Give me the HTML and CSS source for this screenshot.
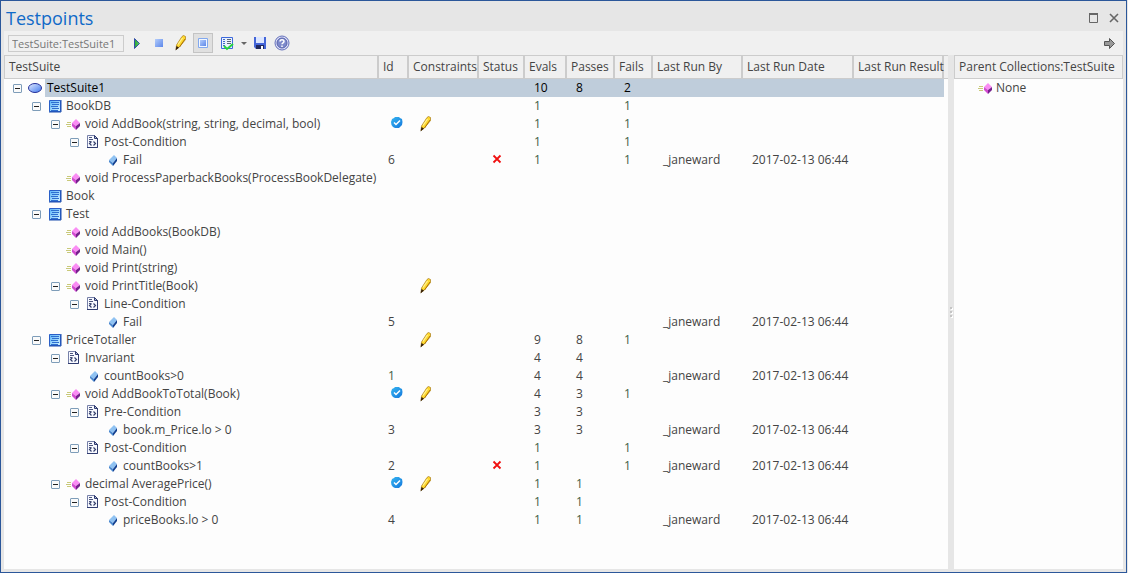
FILE: index.html
```
<!DOCTYPE html>
<html lang="en">
<head>
<meta charset="utf-8">
<title>Testpoints</title>
<link rel="stylesheet" href="styles.css">
</head>
<body>
<svg class="defs" aria-hidden="true">
  <defs>
    <linearGradient id="g-blue" x1="0" y1="0" x2="1" y2="1"><stop offset="0" stop-color="#b4cdfb"/><stop offset="1" stop-color="#5c87ea"/></linearGradient>
    <linearGradient id="g-oval" x1="0" y1="0" x2="1" y2="1"><stop offset="0" stop-color="#e4edff"/><stop offset="1" stop-color="#3f78ee"/></linearGradient>
    <linearGradient id="g-badge" x1="0" y1="0" x2="1" y2="1"><stop offset="0" stop-color="#35b4f0"/><stop offset="1" stop-color="#1478dc"/></linearGradient>
    <linearGradient id="g-class" x1="0" y1="0" x2="1" y2="1"><stop offset="0" stop-color="#5ab4fa"/><stop offset="1" stop-color="#d4f2ff"/></linearGradient>
    <linearGradient id="g-play" x1="0" y1="0" x2="1" y2="0"><stop offset="0" stop-color="#2a9a35"/><stop offset="1" stop-color="#58d860"/></linearGradient>
  </defs>
  <symbol id="suite" viewBox="0 0 16 16"><ellipse cx="7" cy="8" rx="6.500" ry="4.500" fill="url(#g-oval)" stroke="#27329a"/></symbol>
  <symbol id="class" viewBox="0 0 16 16"><path fill="url(#g-class)" stroke="#2a5fc8" d="M2.500 2.500h11v11h-11z"/><path stroke="#1c4fae" d="M14 2v12H2" fill="none"/><path stroke="#2e6fd0" d="M4 4.500h8M5 6.500h7M4 8.500h7M5 10.500h7M4 12.500h7"/></symbol>
  <symbol id="method" viewBox="0 0 16 16"><path stroke="#c9c97a" d="M1 6.500h4M0 8.500h5M1 10.500h4"/><path fill="#fa8df4" d="M10 3l4 4-4 3-4-3z"/><path fill="#d24bd0" d="M6 7l4 3v4l-4-4z"/><path fill="#75208c" d="M14 7l-4 3v4l4-4z"/></symbol>
  <symbol id="script" viewBox="0 0 16 16"><path fill="#f7f9ff" stroke="#7680a8" d="M2.500 1.500h7l3 3v9h-10z"/><path fill="none" stroke="#303c70" d="M12.500 4v9.500H2"/><path fill="#b5bddd" stroke="#303c70" d="M9.500 1.500v3h3z"/><path stroke="#4c557d" d="M4 3.500h3M4 5.500h4M4 7.500h2"/><path fill="none" stroke="#36416d" stroke-width="1.200" d="M6.500 7.500l-2 2 2 2M8.500 7.500l2 2-2 2"/></symbol>
  <symbol id="point" viewBox="0 0 16 16"><path fill="#8fc2f2" d="M10 3l3 3-4 5-4-3z"/><path fill="#4a88cf" d="M5 8l4 3v3l-4-4z"/><path fill="#123f8f" d="M13 6l-4 5v3l4-5z"/></symbol>
  <symbol id="pencil" viewBox="0 0 16 16"><path fill="#ffd92e" stroke="#a87a18" stroke-width=".7" d="M9 1.500l1.500-1 2 1v3L6.500 12 3 14.500l.500-4.500z"/><path stroke="#fff39b" stroke-width="1.200" d="M9.500 3l-4.500 6.500"/><path stroke="#b07608" d="M12 4l-5.500 8"/><path fill="#33200c" d="M3.500 11l2.500 1.500-3.500 3z"/></symbol>
  <symbol id="badge" viewBox="0 0 16 16"><path fill="url(#g-badge)" d="M7 1h4l1 1 2 1 .500 3-.500 3-1 1-2 2H7l-2-1-1.500-2L3 6l1-3 2-1z"/><path fill="none" stroke="#fff" stroke-width="1.500" d="M6 6.500l2 2 4-4"/></symbol>
  <symbol id="cross" viewBox="0 0 16 16"><path fill="none" stroke="#f01010" stroke-width="1.800" d="M5.500 3.500l7 7M12.500 3.500l-7 7"/></symbol>
</svg>

<main class="window">
  <header class="titlebar">
    <h1>Testpoints</h1>
    <button class="win" aria-label="Maximize"><svg width="12" height="12"><path fill="none" stroke="#666" d="M1.500 2v8.500h8V2"/><path stroke="#666" stroke-width="2" d="M1 2h9"/></svg></button>
    <button class="win" aria-label="Close"><svg width="12" height="12"><path stroke="#666" stroke-width="1.600" d="M2 2l8 8M10 2l-8 8"/></svg></button>
  </header>

  <div class="toolbar">
    <input class="suite-name" aria-label="Test suite" value="TestSuite:TestSuite1" readonly>
    <button class="tool" aria-label="Run"><svg width="16" height="16"><path fill="url(#g-play)" stroke="#3450a8" d="M5.500 3.500l5 5-5 5z"/></svg></button>
    <button class="tool" aria-label="Stop"><svg width="16" height="16"><path fill="url(#g-blue)" d="M4 4h8v8H4z"/></svg></button>
    <button class="tool" aria-label="Edit"><svg width="16" height="16"><use href="#pencil"/></svg></button>
    <button class="tool pressed" aria-label="Show constraints" aria-pressed="true"><svg width="16" height="16"><path fill="#f2f7ff" stroke="#82a8ee" d="M3.500 3.500h9v9h-9z"/><path fill="url(#g-blue)" d="M5 5h6v6H5z"/></svg></button>
    <button class="tool" aria-label="Reports"><svg width="16" height="16"><path fill="#e9f2ff" stroke="#3d69dc" d="M2.500 2.500h11v11h-11z"/><path stroke="#4169c8" d="M4 4.500h2M4 6.500h2M4 8.500h2M4 10.500h2"/><path stroke="#596778" d="M8 4.500h4M8 6.500h4M8 8.500h4"/><path fill="none" stroke="#25d43d" stroke-width="2" d="M5 11l3 3 6-5"/></svg></button>
    <button class="tool drop" aria-label="Report options"><svg width="8" height="16"><path fill="#666" d="M1 7h6l-3 3z"/></svg></button>
    <button class="tool" aria-label="Save"><svg width="16" height="16"><path fill="#4465d8" d="M2 2h12v12H4l-2-2z"/><path fill="#dce6ff" d="M4 2h8v6H4z"/><path fill="#20295e" d="M4 10h8v4H4z"/><path fill="#fff" d="M9 11h2v3H9z"/></svg></button>
    <button class="tool help" aria-label="Help"><svg width="16" height="16"><circle cx="8" cy="8" r="7" fill="#dcdff8" stroke="#6470ba"/><circle cx="8" cy="8" r="5" fill="#7e8acb" stroke="#5963ab"/><path fill="none" stroke="#fff" stroke-width="1.500" d="M6 6.500c0-2.500 4-2.500 4 0 0 1.500-2 1.300-2 2.800M8 10.500V12"/></svg></button>
    <button class="tool next" aria-label="Next"><svg width="16" height="16"><path fill="#999" stroke="#555" d="M3.500 6.500h5v-3l5 5-5 5v-3h-5z"/></svg></button>
  </div>

  <div class="panes">
    <section class="pane results">
      <table>
        <colgroup><col class="c-tree"><col class="c-id"><col class="c-con"><col class="c-status"><col class="c-evals"><col class="c-passes"><col class="c-fails"><col class="c-by"><col class="c-date"><col class="c-result"><col></colgroup>
        <thead><tr><th>TestSuite</th><th>Id</th><th>Constraints</th><th>Status</th><th>Evals</th><th>Passes</th><th>Fails</th><th>Last Run By</th><th>Last Run Date</th><th>Last Run Result</th><th></th></tr></thead>
        <tbody>
          <tr class="selected"><td><div class="node l0"><button class="toggle" aria-label="Collapse"></button><svg class="icon"><use href="#suite"/></svg><span>TestSuite1</span></div></td><td></td><td></td><td></td><td>10</td><td>8</td><td>2</td><td></td><td></td><td></td><td></td></tr>
          <tr><td><div class="node l1"><button class="toggle" aria-label="Collapse"></button><svg class="icon"><use href="#class"/></svg><span>BookDB</span></div></td><td></td><td></td><td></td><td class="one">1</td><td></td><td class="one">1</td><td></td><td></td><td></td><td></td></tr>
          <tr><td><div class="node l2"><button class="toggle" aria-label="Collapse"></button><svg class="icon"><use href="#method"/></svg><span>void AddBook(string, string, decimal, bool)</span></div></td><td><svg class="icon"><use href="#badge"/></svg></td><td><svg class="icon"><use href="#pencil"/></svg></td><td></td><td class="one">1</td><td></td><td class="one">1</td><td></td><td></td><td></td><td></td></tr>
          <tr><td><div class="node l3"><button class="toggle" aria-label="Collapse"></button><svg class="icon"><use href="#script"/></svg><span>Post-Condition</span></div></td><td></td><td></td><td></td><td class="one">1</td><td></td><td class="one">1</td><td></td><td></td><td></td><td></td></tr>
          <tr><td><div class="node leaf l4"><svg class="icon"><use href="#point"/></svg><span>Fail</span></div></td><td>6</td><td></td><td><svg class="icon"><use href="#cross"/></svg></td><td class="one">1</td><td></td><td class="one">1</td><td>_janeward</td><td>2017-02-13 06:44</td><td></td><td></td></tr>
          <tr><td><div class="node leaf l2"><svg class="icon"><use href="#method"/></svg><span>void ProcessPaperbackBooks(ProcessBookDelegate)</span></div></td><td></td><td></td><td></td><td></td><td></td><td></td><td></td><td></td><td></td><td></td></tr>
          <tr><td><div class="node leaf l1"><svg class="icon"><use href="#class"/></svg><span>Book</span></div></td><td></td><td></td><td></td><td></td><td></td><td></td><td></td><td></td><td></td><td></td></tr>
          <tr><td><div class="node l1"><button class="toggle" aria-label="Collapse"></button><svg class="icon"><use href="#class"/></svg><span>Test</span></div></td><td></td><td></td><td></td><td></td><td></td><td></td><td></td><td></td><td></td><td></td></tr>
          <tr><td><div class="node leaf l2"><svg class="icon"><use href="#method"/></svg><span>void AddBooks(BookDB)</span></div></td><td></td><td></td><td></td><td></td><td></td><td></td><td></td><td></td><td></td><td></td></tr>
          <tr><td><div class="node leaf l2"><svg class="icon"><use href="#method"/></svg><span>void Main()</span></div></td><td></td><td></td><td></td><td></td><td></td><td></td><td></td><td></td><td></td><td></td></tr>
          <tr><td><div class="node leaf l2"><svg class="icon"><use href="#method"/></svg><span>void Print(string)</span></div></td><td></td><td></td><td></td><td></td><td></td><td></td><td></td><td></td><td></td><td></td></tr>
          <tr><td><div class="node l2"><button class="toggle" aria-label="Collapse"></button><svg class="icon"><use href="#method"/></svg><span>void PrintTitle(Book)</span></div></td><td></td><td><svg class="icon"><use href="#pencil"/></svg></td><td></td><td></td><td></td><td></td><td></td><td></td><td></td><td></td></tr>
          <tr><td><div class="node l3"><button class="toggle" aria-label="Collapse"></button><svg class="icon"><use href="#script"/></svg><span>Line-Condition</span></div></td><td></td><td></td><td></td><td></td><td></td><td></td><td></td><td></td><td></td><td></td></tr>
          <tr><td><div class="node leaf l4"><svg class="icon"><use href="#point"/></svg><span>Fail</span></div></td><td>5</td><td></td><td></td><td></td><td></td><td></td><td>_janeward</td><td>2017-02-13 06:44</td><td></td><td></td></tr>
          <tr><td><div class="node l1"><button class="toggle" aria-label="Collapse"></button><svg class="icon"><use href="#class"/></svg><span>PriceTotaller</span></div></td><td></td><td><svg class="icon"><use href="#pencil"/></svg></td><td></td><td>9</td><td>8</td><td class="one">1</td><td></td><td></td><td></td><td></td></tr>
          <tr><td><div class="node l2"><button class="toggle" aria-label="Collapse"></button><svg class="icon"><use href="#script"/></svg><span>Invariant</span></div></td><td></td><td></td><td></td><td>4</td><td>4</td><td></td><td></td><td></td><td></td><td></td></tr>
          <tr><td><div class="node leaf l3"><svg class="icon"><use href="#point"/></svg><span>countBooks&gt;0</span></div></td><td class="one">1</td><td></td><td></td><td>4</td><td>4</td><td></td><td>_janeward</td><td>2017-02-13 06:44</td><td></td><td></td></tr>
          <tr><td><div class="node l2"><button class="toggle" aria-label="Collapse"></button><svg class="icon"><use href="#method"/></svg><span>void AddBookToTotal(Book)</span></div></td><td><svg class="icon"><use href="#badge"/></svg></td><td><svg class="icon"><use href="#pencil"/></svg></td><td></td><td>4</td><td>3</td><td class="one">1</td><td></td><td></td><td></td><td></td></tr>
          <tr><td><div class="node l3"><button class="toggle" aria-label="Collapse"></button><svg class="icon"><use href="#script"/></svg><span>Pre-Condition</span></div></td><td></td><td></td><td></td><td>3</td><td>3</td><td></td><td></td><td></td><td></td><td></td></tr>
          <tr><td><div class="node leaf l4"><svg class="icon"><use href="#point"/></svg><span>book.m_Price.lo &gt; 0</span></div></td><td>3</td><td></td><td></td><td>3</td><td>3</td><td></td><td>_janeward</td><td>2017-02-13 06:44</td><td></td><td></td></tr>
          <tr><td><div class="node l3"><button class="toggle" aria-label="Collapse"></button><svg class="icon"><use href="#script"/></svg><span>Post-Condition</span></div></td><td></td><td></td><td></td><td class="one">1</td><td></td><td class="one">1</td><td></td><td></td><td></td><td></td></tr>
          <tr><td><div class="node leaf l4"><svg class="icon"><use href="#point"/></svg><span>countBooks&gt;1</span></div></td><td>2</td><td></td><td><svg class="icon"><use href="#cross"/></svg></td><td class="one">1</td><td></td><td class="one">1</td><td>_janeward</td><td>2017-02-13 06:44</td><td></td><td></td></tr>
          <tr><td><div class="node l2"><button class="toggle" aria-label="Collapse"></button><svg class="icon"><use href="#method"/></svg><span>decimal AveragePrice()</span></div></td><td><svg class="icon"><use href="#badge"/></svg></td><td><svg class="icon"><use href="#pencil"/></svg></td><td></td><td class="one">1</td><td class="one">1</td><td></td><td></td><td></td><td></td><td></td></tr>
          <tr><td><div class="node l3"><button class="toggle" aria-label="Collapse"></button><svg class="icon"><use href="#script"/></svg><span>Post-Condition</span></div></td><td></td><td></td><td></td><td class="one">1</td><td class="one">1</td><td></td><td></td><td></td><td></td><td></td></tr>
          <tr><td><div class="node leaf l4"><svg class="icon"><use href="#point"/></svg><span>priceBooks.lo &gt; 0</span></div></td><td>4</td><td></td><td></td><td class="one">1</td><td class="one">1</td><td></td><td>_janeward</td><td>2017-02-13 06:44</td><td></td><td></td></tr>
        </tbody>
      </table>
    </section>
    <div class="splitter"><i></i><i></i><i></i></div>
    <section class="pane parents">
      <h2>Parent Collections:TestSuite</h2>
      <div class="parent"><svg class="icon"><use href="#method"/></svg><span>None</span></div>
    </section>
  </div>
</main>
</body>
</html>
```
FILE: styles.css
```
* { box-sizing: border-box; }
body { margin: 0; background: #e6e6e6; font: 12px/18px "Open Sans", "Noto Sans", sans-serif; color: #444; }
button { padding: 0; border: 0; background: none; font: inherit; }
svg { display: block; }
.defs { position: absolute; width: 0; height: 0; }

.window { display: flex; flex-direction: column; min-height: 100vh; margin-right: 1px; padding: 0 3px 3px; background: #e6e6e6; border: 1px solid #2b579a; }
.titlebar { display: flex; align-items: center; gap: 8px; height: 30px; padding: 4px 3px 0 2px; }
.titlebar h1 { flex: 1; margin: 0; font: 18px/26px "Open Sans", "Noto Sans", sans-serif; color: #106ac8; }
.win { width: 12px; height: 12px; }

.toolbar { display: flex; align-items: center; height: 24px; padding: 0 3px 0 4px; background: #f0f0f0; }
.suite-name { width: 116px; height: 17px; margin-right: 2px; padding: 0 3px; border: 1px solid #ccc; background: #f0f0f0; color: #777; font: 11px/15px "Open Sans", "Noto Sans", sans-serif; }
.tool { display: flex; align-items: center; justify-content: center; width: 22px; height: 20px; }
.tool.pressed { width: 20px; margin: 0 3px 0 1px; border: 1px solid #c4c4c4; background: #e0e0e0; }
.tool.drop { width: 11px; }
.tool.next { margin-left: auto; }

.panes { display: flex; flex: 1; }
.pane { background: #fdfdfd; }
.results { flex: 1; }
table { width: 100%; table-layout: fixed; border-collapse: separate; border-spacing: 0; }
.c-tree { width: 375px; }
.c-id { width: 30px; }
.c-con { width: 70px; }
.c-status { width: 46px; }
.c-evals { width: 42px; }
.c-passes { width: 48px; }
.c-fails { width: 38px; }
.c-by { width: 90px; }
.c-date { width: 111px; }
.c-result { width: 90px; }
th, .parents h2 { height: 24px; padding: 0 0 0 4px; border: solid #ccc; border-width: 1px 2px 1px 0; background: #f0f0f0; font-size: 12px; line-height: 22px; font-weight: 400; text-align: left; white-space: nowrap; }
th:first-child { border-left-width: 1px; }
th:last-child { border-right: 0; }
td { height: 18px; padding: 0 0 0 9px; white-space: nowrap; }
td:first-child { padding: 0; }
td:nth-child(8) { padding-left: 10px; }
.one { color: #3f6045; }

.node { display: flex; align-items: center; height: 18px; padding-left: 9px; }
.node.leaf { padding-left: 24px; }
.l1 { margin-left: 19px; }
.l2 { margin-left: 38px; }
.l3 { margin-left: 57px; }
.l4 { margin-left: 76px; }
.node span { padding-left: 2px; }
.icon { flex: none; width: 16px; height: 16px; }
.node .icon { margin-right: 1px; }
.toggle { flex: none; width: 9px; height: 9px; margin-right: 6px; border: 1px solid #7e9db9; border-radius: 1px; background: linear-gradient(#222, #222) center / 5px 1px no-repeat, #fafafa; }
.selected { color: #000; }
.selected td:not(:first-child):not(:last-child), .selected .node span { background: #bfcddb; }
.selected .node span { flex: 1; }

.splitter { display: flex; flex-direction: column; align-items: center; justify-content: center; gap: 2px; width: 6px; }
.splitter i { width: 2px; height: 2px; background: #c4c4c4; box-shadow: 1px 1px #fff; }
.parents { width: 169px; }
.parents h2 { margin: 0; border-width: 1px; }
.parent { display: flex; align-items: center; gap: 2px; height: 18px; padding-left: 24px; }
```
